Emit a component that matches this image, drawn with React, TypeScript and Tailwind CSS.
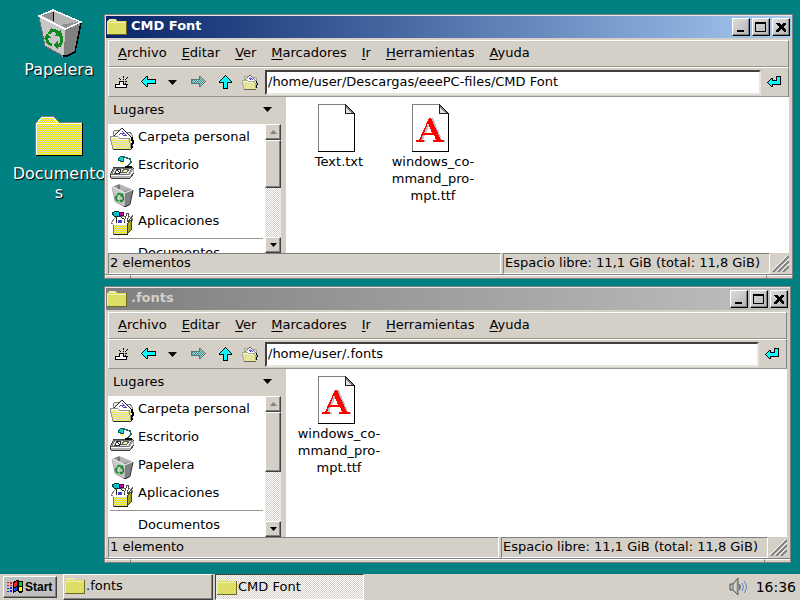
import type { ReactNode } from "react";

const FONT = "font-['DejaVu_Sans',sans-serif]";

/* ---------- shared dither patterns ---------- */

function Patterns() {
  return (
    <svg className="absolute h-0 w-0" aria-hidden="true" shapeRendering="crispEdges">
      <defs>
        <pattern id="ditherYellow" width="2" height="2" patternUnits="userSpaceOnUse">
          <rect width="2" height="2" fill="#ffff00" />
          <rect width="1" height="1" fill="#c8c8b0" />
          <rect x="1" y="1" width="1" height="1" fill="#c8c8b0" />
        </pattern>
        <pattern id="ditherPale" width="2" height="2" patternUnits="userSpaceOnUse">
          <rect width="2" height="2" fill="#f4f060" />
          <rect width="1" height="1" fill="#d8d8d0" />
          <rect x="1" y="1" width="1" height="1" fill="#d8d8d0" />
        </pattern>
        <pattern id="ditherTeal" width="2" height="2" patternUnits="userSpaceOnUse">
          <rect width="2" height="2" fill="#2f9090" />
          <rect width="1" height="1" fill="#c0d0cc" />
          <rect x="1" y="1" width="1" height="1" fill="#c0d0cc" />
        </pattern>
      </defs>
    </svg>
  );
}

/* ---------- icons ---------- */

function TrashIcon({ size }: { size: number }) {
  return (
    <svg
      width={size}
      height={size}
      viewBox="0 0 48 48"
      aria-hidden="true"
      shapeRendering={size > 24 ? "crispEdges" : "auto"}
    >
      <path d="M4 7 18 1 46 13 40 43 32 48 28 48 10 37Z" fill="#c0c0c0" />
      <path d="M30 20 45 14 40 42 32 47 29 47Z" fill="#808080" />
      <path d="M5 7 30 20 29 47 10 37Z" fill="#c8c8c8" />
      <path d="M6 6 18 3 44 13 31 19Z" fill="#909090" />
      <path d="M19 3 19 13 25 16 43 13Z" fill="#b4b4b4" />
      <path d="M18 3V12" stroke="#000" fill="none" />
      <path d="M4 7 18 1 46 13 30 20Z" fill="none" stroke="#fff" strokeWidth="1.5" />
      <path d="M4 8 10 37 28 47" fill="none" stroke="#707070" />
      <path d="M46 14 40 43 32 47 28 47" fill="none" stroke="#000" strokeWidth="1.5" />
      <g fill="none" stroke="#108820" strokeWidth="3">
        <path d="M14 25 17 21 21 22 24 25" />
        <path d="M26 27 27 32 25 36 22 36" />
        <path d="M11 28 13 34 17 36" />
      </g>
      <g fill="#108820">
        <path d="M20 27 27 28 26 20Z" />
        <path d="M23 32 18 36 23 40Z" />
        <path d="M9 30 12 24 16 29Z" />
      </g>
    </svg>
  );
}

function BigFolderIcon() {
  return (
    <svg width="48" height="42" viewBox="0 0 48 42" aria-hidden="true" shapeRendering="crispEdges">
      <path d="M1 40V7L6 1H19L24 7H47V40Z" fill="url(#ditherYellow)" />
      <path d="M0 40V7H2L6 1V0H19L24 6H47V7H24L19 1H6L1 7V40Z" fill="#808080" />
      <path d="M1 39V7H23M2 7 7 1H18L22 6" fill="none" stroke="#fff" />
      <path d="M1 7.5H46M1.5 7V39" stroke="#fff" fill="none" />
      <path d="M1 40H48V7H47V39H1Z" fill="#000" />
    </svg>
  );
}

function FolderIcon() {
  return (
    <svg width="20" height="18" viewBox="0 0 20 18" aria-hidden="true" shapeRendering="crispEdges">
      <path d="M0 3 2 1H8L10 3H19V17H0Z" fill="#dede66" />
      <path d="M2 1H8L10 3H1Z" fill="#e6e6a0" />
      <path d="M0 16V4H19M1 3 3 1H8" fill="none" stroke="#eeeeb0" />
      <path d="M0 17H20V3H19V16H0Z" fill="#6a6a28" />
    </svg>
  );
}

function OpenFolderIcon({ size }: { size: number }) {
  return (
    <svg width={size} height={size} viewBox="0 0 24 24" aria-hidden="true" shapeRendering="crispEdges">
      <path d="M3 9V5L5 3H10L12 5H20L22 8V20H4Z" fill="#e8e8e0" stroke="#808080" />
      <path d="M4 9 12 1 23 12 18 17H8Z" fill="#fff" />
      <path d="M4 9 12 1 23 12" fill="none" stroke="#202020" />
      <path d="M9 8 12 4 17 9Z" fill="#5050d0" />
      <path d="M10 7.5H12M13 7.5H15M11 5.5H13" stroke="#fff" />
      <path d="M22 10V13L24 15 21 18 22 20 20 22" fill="none" stroke="#000" strokeWidth="1.5" />
      <path d="M0 10 1 9H7L9 11H19L21 13V22H3Z" fill="url(#ditherPale)" />
      <path d="M3 22 0 10 1 9H7L9 11H19L21 21" fill="none" stroke="#909088" />
      <path d="M1 10.5H7L9 12.5H18" stroke="#fff" fill="none" />
      <path d="M3 22.5H21" stroke="#303030" fill="none" />
    </svg>
  );
}

function DeskIcon() {
  return (
    <svg width="24" height="24" viewBox="0 0 24 24" aria-hidden="true" shapeRendering="crispEdges">
      <path d="M0 20 4 12H22L24 14V18L20 23H1Z" fill="#b0b0b0" stroke="#404040" />
      <path d="M2 19 5 13H22L19 19Z" fill="#e4e4e4" stroke="#707070" />
      <path d="M5 18 7 14H11L10 18Z" fill="#fff" stroke="#303030" />
      <path d="M12 17 14 14H19L17 17Z" fill="#fff8b0" stroke="#606060" />
      <path d="M7 15 10 18" stroke="#000" />
      <path d="M1 20.5H20L23 16" stroke="#fff" fill="none" />
      <path d="M14 2 20 4 21 7 18 11" fill="none" stroke="#206868" strokeWidth="1.5" />
      <path d="M8 5 11 1 14 2 13 7Z" fill="#20d0d0" stroke="#106060" />
      <path d="M11 8H13" stroke="#ff0" strokeWidth="2" />
      <path d="M15 12H22" stroke="#000" strokeWidth="2" />
    </svg>
  );
}

function AppsIcon() {
  return (
    <svg width="24" height="24" viewBox="0 0 24 24" aria-hidden="true" shapeRendering="crispEdges">
      <path d="M1 12 5 7 18 5 23 8 20 14 5 14Z" fill="#fff" stroke="#808080" />
      <path d="M6 12V6L9 5 14 8V12" fill="#fff" stroke="#202020" />
      <path d="M2 2 6 0 9 1V5L4 5Z" fill="#00c0c0" stroke="#004040" />
      <path d="M9 1 13 1 14 4 10 5Z" fill="#e000c0" stroke="#400040" />
      <path d="M14 11 17 2 19 3 17 11M18 11 23 4" fill="#fff" stroke="#505050" />
      <path d="M8 9H12V12H8Z" fill="#4040d0" />
      <path d="M3 13H17V23H3Z" fill="url(#ditherYellow)" stroke="#808020" />
      <path d="M17 13 21 9V19L17 23Z" fill="#a8a820" stroke="#404000" />
      <path d="M2 13H17" stroke="#fff" />
      <path d="M4 23H18" stroke="#202000" />
    </svg>
  );
}

function DocumentIcon({ font }: { font: boolean }) {
  return (
    <svg width="48" height="48" viewBox="0 0 48 48" aria-hidden="true" shapeRendering="crispEdges">
      <path d="M3 0H31L40 9V48H3Z" fill="#fff" />
      <path d="M3 0H31V1H4V47H3Z" fill="#808080" />
      <path d="M31 1 39 9H31Z" fill="#e0e0e0" />
      <path d="M31 1 39 9H36L31 4Z" fill="#808080" />
      <path d="M30.5 0V9.5H39" stroke="#202020" fill="none" />
      <path d="M31 1 40 10" stroke="#000" fill="none" />
      <path d="M3 47H39V9H40V48H3Z" fill="#000" />
      {font && (
        <g fillRule="evenodd">
          <path
            d="M9 38V36H11L22 14H24L33 36H36V38H25V36H28L25 31H16L14 36H17V38ZM17 29H24L21 20Z"
            fill="#c0c0c0"
          />
          <path
            d="M7 38V36H10L20 14H22L32 36H35V38H24V36H27L25 31H14L12 36H15V38ZM15 29H23L19 19Z"
            fill="#ff0000"
          />
        </g>
      )}
    </svg>
  );
}

function NewTabIcon() {
  return (
    <svg width="16" height="16" viewBox="0 0 16 16" aria-hidden="true" shapeRendering="crispEdges">
      <path d="M1.5 13.5V10.5H5.5V7.5H9.5V10.5H12.5V13.5Z" fill="#fff" stroke="#000" />
      <path
        d="M5 4h1v1h-1zM6 5h1v1h-1zM9 2h1v2h-1zM9 5h1v1h-1zM11 5h1v1h-1zM12 4h1v1h-1zM13 3h1v1h-1zM11 7h2v1h-2zM11 9h1v1h-1zM13 10h1v1h-1z"
        fill="#000"
      />
    </svg>
  );
}

function ArrowIcon({ direction }: { direction: "back" | "forward" | "up" }) {
  if (direction === "up") {
    return (
      <svg width="16" height="16" viewBox="0 0 16 16" aria-hidden="true" shapeRendering="crispEdges">
        <path d="M7.5 1.5 1.5 7.5V8.5H5.5V14.5H9.5V8.5H13.5V7.5Z" fill="#00ffff" stroke="#000" />
      </svg>
    );
  }
  const forward = direction === "forward";
  return (
    <svg width="16" height="16" viewBox="0 0 16 16" aria-hidden="true" shapeRendering="crispEdges">
      {forward ? (
        <path d="M14.5 7.5 9.5 2.5H8.5V5.5H0.5V9.5H8.5V12.5H9.5Z" fill="url(#ditherTeal)" stroke="#587878" />
      ) : (
        <path d="M0.5 7.5 5.5 2.5H6.5V5.5H14.5V9.5H6.5V12.5H5.5Z" fill="#00ffff" stroke="#000" />
      )}
    </svg>
  );
}

function ReturnIcon() {
  return (
    <svg width="16" height="16" viewBox="0 0 16 16" aria-hidden="true" shapeRendering="crispEdges">
      <path d="M0.5 8.5 4.5 4.5H5.5V6.5H9.5V2.5H13.5V10.5H5.5V12.5H4.5Z" fill="#00ffff" stroke="#000" />
    </svg>
  );
}

function Caret({ up = false, muted = false, small = false }: { up?: boolean; muted?: boolean; small?: boolean }) {
  const width = small ? 7 : 9;
  return (
    <svg width={width} height={small ? 4 : 5} viewBox="0 0 10 5" preserveAspectRatio="none" aria-hidden="true">
      <path d={up ? "M0 5 5 0 10 5Z" : "M0 0H10L5 5Z"} fill={muted ? "#808080" : "#000"} />
    </svg>
  );
}

function FlagIcon() {
  return (
    <svg width="17" height="16" viewBox="0 0 17 16" aria-hidden="true" shapeRendering="crispEdges">
      <path d="M6 3 10 1 13 2 16 2V13L13 14 10 12 6 14Z" fill="#000" />
      <path d="M7 4 10 2V7L7 8Z" fill="#ff2020" />
      <path d="M12 3H15V7L12 7Z" fill="#00d030" />
      <path d="M7 9 10 8V11L7 12Z" fill="#2040ff" />
      <path d="M12 8H15V12H12Z" fill="#ffff00" />
      <path d="M0 3h2v1h-2zM3 3h2v2h-2zM0 6h2v1h-2zM3 6h2v1h-2z" fill="#e02020" />
      <path d="M0 9h2v1h-2zM3 8h2v2h-2zM0 12h2v1h-2zM3 11h2v2h-2z" fill="#2030c0" />
    </svg>
  );
}

function SpeakerIcon() {
  return (
    <svg width="20" height="20" viewBox="0 0 20 20" aria-hidden="true">
      <path d="M1 7H4L9 1V18L4 13H1Z" fill="#babdb6" stroke="#50524e" />
      <path d="M4 7V13" stroke="#777" />
      <path d="M6 6V14" stroke="#eee" />
      <path d="M10 7Q13 10 10 13" fill="#888" stroke="#555" />
      <path d="M13 6Q16 10 13 14M15 4Q20 10 15 16" fill="none" stroke="#5a82c0" />
    </svg>
  );
}

function Grip() {
  return (
    <svg width="17" height="17" viewBox="0 0 17 17" aria-hidden="true">
      <path d="M1 17 17 1M6 17 17 6M11 17 17 11" stroke="#808080" strokeWidth="2" />
      <path d="M0 16 16 0M5 16 17 4M10 16 17 9" stroke="#fff" />
    </svg>
  );
}

/* ---------- window ---------- */

const RAISED =
  "border border-t-white border-l-white border-r-[#404040] border-b-[#404040] shadow-[inset_-1px_-1px_0_#808080]";

function CaptionButton({ label, children }: { label: string; children: ReactNode }) {
  return (
    <button
      aria-label={label}
      className="h-[18px] w-[18px] border border-t-white border-r-black border-b-black border-l-white bg-linear-to-br from-[#dcdcdc] to-[#b4b4b4] shadow-[inset_-1px_-1px_0_#808080]"
    >
      <svg width="16" height="16" viewBox="0 0 16 16" aria-hidden="true" shapeRendering="crispEdges">
        {children}
      </svg>
    </button>
  );
}

const MENUS = ["Archivo", "Editar", "Ver", "Marcadores", "Ir", "Herramientas", "Ayuda"];

function Menu() {
  return (
    <nav className="flex h-[27px] items-center gap-[15px] border border-t-white border-r-[#808080] border-b-[#9a958b] border-l-white pb-0.5 pl-[9px]">
      {MENUS.map((name) => (
        <button key={name} className="leading-4">
          <span className="underline underline-offset-2">{name[0]}</span>
          {name.slice(1)}
        </button>
      ))}
    </nav>
  );
}

const TOOL = "flex shrink-0 items-center justify-center";

function Toolbar({ path }: { path: string }) {
  return (
    <div className="flex h-[30px] items-center border border-t-white border-r-[#808080] border-b-[#9a958b] border-l-white">
      <button aria-label="Nueva pestaña" className={`${TOOL} w-[26px]`}>
        <NewTabIcon />
      </button>
      <button aria-label="Atrás" className={`${TOOL} w-[28px]`}>
        <ArrowIcon direction="back" />
      </button>
      <button aria-label="Historial" className={`${TOOL} w-[18px]`}>
        <Caret />
      </button>
      <button aria-label="Adelante" className={`${TOOL} w-[36px]`}>
        <ArrowIcon direction="forward" />
      </button>
      <button aria-label="Subir" className={`${TOOL} w-[18px]`}>
        <ArrowIcon direction="up" />
      </button>
      <button aria-label="Inicio" className={`${TOOL} w-[30px]`}>
        <OpenFolderIcon size={16} />
      </button>
      <input
        aria-label="Ruta"
        defaultValue={path}
        className="h-[25px] min-w-0 flex-1 border-2 border-t-[#404040] border-r-[#e8e6e0] border-b-[#e8e6e0] border-l-[#404040] bg-white px-px pb-0.5 outline-none"
      />
      <button aria-label="Ir" className={`${TOOL} w-[27px]`}>
        <ReturnIcon />
      </button>
    </div>
  );
}

function Scrollbar({ thumb }: { thumb: string }) {
  return (
    <div className="flex w-4 shrink-0 flex-col bg-[conic-gradient(#fff_25%,#d4d0c8_0_50%,#fff_0_75%,#d4d0c8_0)] bg-[length:2px_2px]">
      <button aria-label="Desplazar arriba" className={`flex h-4 items-center justify-center bg-[#d4d0c8] ${RAISED}`}>
        <Caret up muted small />
      </button>
      <div className="min-h-0 flex-1">
        <div className={`bg-[#d4d0c8] ${thumb} ${RAISED}`} />
      </div>
      <button aria-label="Desplazar abajo" className={`flex h-4 items-center justify-center bg-[#d4d0c8] ${RAISED}`}>
        <Caret small />
      </button>
    </div>
  );
}

function Place({ icon, name }: { icon?: ReactNode; name: string }) {
  return (
    <li className="flex h-7 shrink-0 items-center gap-1 pl-0.5">
      <span className="h-6 w-6">{icon}</span>
      <span className="pb-1 leading-4">{name}</span>
    </li>
  );
}

function Sidebar({ thumb }: { thumb: string }) {
  return (
    <aside className="flex w-[178px] shrink-0 flex-col pr-[5px]">
      <button className="flex h-[27px] shrink-0 items-center justify-between pr-[9px] pb-0.5 pl-[5px]">
        <span>Lugares</span>
        <Caret />
      </button>
      <div className="flex min-h-0 flex-1">
        <ul className="flex min-w-0 flex-1 flex-col overflow-hidden bg-white pt-px">
          <Place icon={<OpenFolderIcon size={24} />} name="Carpeta personal" />
          <Place icon={<DeskIcon />} name="Escritorio" />
          <Place icon={<TrashIcon size={24} />} name="Papelera" />
          <Place icon={<AppsIcon />} name="Aplicaciones" />
          <li className="mx-0.5 mt-px mb-0.5 h-px shrink-0 bg-[#9a958b]" />
          <Place name="Documentos" />
        </ul>
        <Scrollbar thumb={thumb} />
      </div>
    </aside>
  );
}

type FileEntry = { lines: string[]; font: boolean };

const TTF: FileEntry = { lines: ["windows_co-", "mmand_pro-", "mpt.ttf"], font: true };
const TXT: FileEntry = { lines: ["Text.txt"], font: false };

type WindowProps = {
  title: string;
  path: string;
  files: FileEntry[];
  count: string;
  active: boolean;
  place: string;
  thumb: string;
};

function FileWindow({ title, path, files, count, active, place, thumb }: WindowProps) {
  return (
    <section
      className={`absolute flex flex-col border border-[#808080] bg-[#d4d0c8] shadow-[inset_1px_1px_0_#e8e6e0] ${place}`}
    >
      <header
        className={`mx-px mt-px flex h-[22px] shrink-0 items-center gap-0.5 pr-px pl-px ${
          active ? "bg-linear-to-r from-[#0a246a] to-[#a6caf0]" : "bg-linear-to-r from-[#808080] to-[#c0c0c0]"
        }`}
      >
        <FolderIcon />
        <h2 className={`flex-1 pb-0.5 pl-0.5 font-bold leading-4 ${active ? "text-white" : "text-[#d4d0c8]"}`}>
          {title}
        </h2>
        <CaptionButton label="Minimizar">
          <path d="M4 11H11V13H4Z" fill="#000" />
        </CaptionButton>
        <CaptionButton label="Maximizar">
          <path d="M2 3H13V13H2ZM3 5V12H12V5Z" fill="#000" fillRule="evenodd" />
        </CaptionButton>
        <CaptionButton label="Cerrar">
          <path d="M3 4H6L8 6 10 4H13V5L10 8 13 11V13H11L8 10 5 13H3V11L6 8 3 5Z" fill="#000" />
        </CaptionButton>
      </header>
      <div className="mt-0.5 mr-[3px] ml-[3px] flex min-h-0 flex-1 flex-col">
        <Menu />
        <Toolbar path={path} />
        <div className="flex min-h-0 flex-1">
          <Sidebar thumb={thumb} />
          <main className="flex flex-1 items-start bg-white pt-[7px] pl-1.5">
            {files.map((file) => (
              <figure key={file.lines[0]} className="flex w-[94px] flex-col items-center">
                <DocumentIcon font={file.font} />
                <figcaption className="pt-px text-center leading-[17px] whitespace-nowrap">
                  {file.lines.map((line) => (
                    <div key={line}>{line}</div>
                  ))}
                </figcaption>
              </figure>
            ))}
          </main>
        </div>
        <footer className="flex h-[21px] shrink-0 gap-0.5">
          <p className="flex-1 border border-t-[#808080] border-r-white border-b-white border-l-[#808080] pl-px leading-[18px]">
            {count}
          </p>
          <p className="w-[267px] border border-t-[#808080] border-r-white border-b-white border-l-[#808080] pl-px leading-[18px] whitespace-nowrap">
            Espacio libre: 11,1 GiB (total: 11,8 GiB)
          </p>
          <span className="pt-0.5">
            <Grip />
          </span>
        </footer>
      </div>
      <div className="flex h-1 shrink-0 border-t border-[#808080]">
        <span className="w-[26px] border-t border-r border-t-white border-r-[#808080]" />
        <span className="flex-1 border-t border-white" />
        <span className="w-[26px] border-t border-l border-t-white border-l-[#808080]" />
      </div>
    </section>
  );
}

/* ---------- desktop ---------- */

function Shortcut({ icon, name }: { icon: ReactNode; name: string }) {
  return (
    <button className="flex w-24 flex-col items-center text-base leading-[19px] break-all text-white [text-shadow:1px_1px_1px_#000]">
      {icon}
      <span>{name}</span>
    </button>
  );
}

export default function App() {
  return (
    <div className={`relative flex min-h-screen flex-col overflow-hidden bg-[#008080] text-[13px] text-black ${FONT}`}>
      <Patterns />
      <div className="flex flex-1 flex-col items-start gap-[37px] pt-[9px] pl-[11px]">
        <Shortcut
          icon={
            <span className="h-[51px]">
              <TrashIcon size={48} />
            </span>
          }
          name="Papelera"
        />
        <Shortcut
          icon={
            <span className="h-12">
              <BigFolderIcon />
            </span>
          }
          name="Documentos"
        />
      </div>

      <FileWindow
        title="CMD Font"
        path="/home/user/Descargas/eeePC-files/CMD Font"
        files={[TXT, TTF]}
        count="2 elementos"
        active
        place="top-[14px] left-[104px] right-[7px] h-[265px]"
        thumb="h-12"
      />
      <FileWindow
        title=".fonts"
        path="/home/user/.fonts"
        files={[TTF]}
        count="1 elemento"
        active={false}
        place="top-[286px] left-[104px] right-[9px] h-[277px]"
        thumb="h-[60px]"
      />

      <footer className="flex h-[26px] items-center bg-[#d4d0c8] pr-1 pl-[3px]">
        <button
          className={`mr-1.5 flex h-[22px] w-[54px] items-center gap-px bg-[#c0c0c0] pl-[3px] font-['Liberation_Sans',sans-serif] text-xs font-bold ${RAISED}`}
        >
          <FlagIcon />
          <span>Start</span>
        </button>
        <button className={`mr-0.5 flex h-[26px] w-[150px] items-center gap-px pb-0.5 pl-px ${RAISED}`}>
          <FolderIcon />
          <span>.fonts</span>
        </button>
        <button className="flex h-[26px] w-[149px] items-center gap-px border border-t-[#404040] border-r-white border-b-white border-l-[#404040] bg-[conic-gradient(#fff_25%,#d4d0c8_0_50%,#fff_0_75%,#d4d0c8_0)] bg-[length:2px_2px] pl-px">
          <FolderIcon />
          <span>CMD Font</span>
        </button>
        <div className="ml-auto flex items-center gap-[7px]">
          <SpeakerIcon />
          <time className="text-sm">16:36</time>
        </div>
      </footer>
    </div>
  );
}
